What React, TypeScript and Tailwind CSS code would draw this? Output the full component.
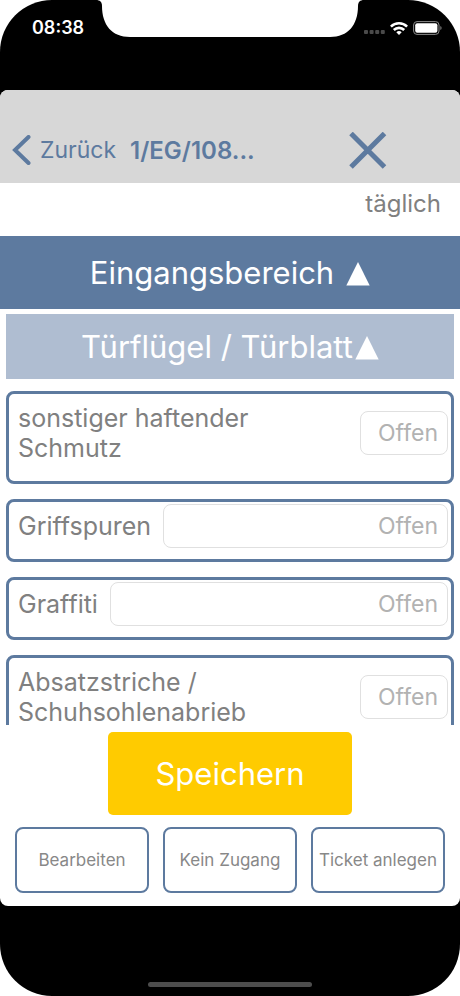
import { useState } from 'react';

type CheckItem = {
  id: string;
  label: string;
  compact?: boolean;
};

const items: CheckItem[] = [
  { id: 'schmutz', label: 'sonstiger haftender Schmutz', compact: true },
  { id: 'griffspuren', label: 'Griffspuren' },
  { id: 'graffiti', label: 'Graffiti' },
  { id: 'absatzstriche', label: 'Absatzstriche / Schuhsohlenabrieb', compact: true },
];

const actions = ['Bearbeiten', 'Kein Zugang', 'Ticket anlegen'];

function Triangle() {
  return (
    <svg viewBox="0 0 24 24" className="w-6 h-6 shrink-0" fill="currentColor" aria-hidden="true">
      <path d="M12 0 23.7 23.6H0.3Z" />
    </svg>
  );
}

function StatusBar() {
  return (
    <div className="relative h-[90px] shrink-0 flex items-start justify-between pl-8 pr-[18px] pt-4 text-white">
      {/* Notch */}
      <svg
        viewBox="0 0 268 37"
        className="absolute top-0 left-1/2 -translate-x-1/2 w-[268px] h-[37px]"
        fill="#fff"
        aria-hidden="true"
      >
        <path d="M0 0C4 0 6 2 6 6C6 25 16 37 34 37H234C252 37 262 25 262 6C262 2 264 0 268 0Z" />
      </svg>
      <span className="text-lg leading-6 font-semibold">08:38</span>
      <div className="flex items-center gap-[5px] h-6">
        <svg viewBox="0 0 21 4" className="w-[21px] h-1 mt-2" fill="#4a4a4a" aria-hidden="true">
          <rect x="0" y="0" width="4" height="4" rx="1" />
          <rect x="5.6" y="0" width="4" height="4" rx="1" />
          <rect x="11.2" y="0" width="4" height="4" rx="1" />
          <rect x="16.8" y="0" width="4" height="4" rx="1" />
        </svg>
        <svg viewBox="0 0 18 13" className="w-[18px] h-[13px]" fill="none" stroke="#fff" strokeWidth="2.6" aria-hidden="true">
          <path d="M0.9 4.6A11.6 11.6 0 0 1 17.1 4.6" />
          <path d="M3.8 8A7.4 7.4 0 0 1 14.2 8" />
          <path d="M9 13 6.3 10.3A3.9 3.9 0 0 1 11.7 10.3Z" fill="#fff" stroke="none" />
        </svg>
        <svg viewBox="0 0 29 14" className="w-[29px] h-[14px]" aria-hidden="true">
          <rect x="0.6" y="0.6" width="25.4" height="12.8" rx="3.4" fill="none" stroke="#8a8a8a" strokeWidth="1" />
          <rect x="2.2" y="2.2" width="22.2" height="9.6" rx="2" fill="#fff" />
          <path d="M27.4 5A2.3 2.3 0 0 1 27.4 9Z" fill="#8a8a8a" />
        </svg>
      </div>
    </div>
  );
}

function Header() {
  return (
    <header className="h-[93px] shrink-0 flex items-center bg-[#d7d7d7] pt-7 pl-3 pr-[73px] text-[#5d7a9f]">
      <button className="flex items-center gap-2 text-[23px]">
        <svg viewBox="0 0 20 32" className="w-5 h-8" fill="none" stroke="currentColor" strokeWidth="4" strokeLinecap="round" strokeLinejoin="miter" aria-hidden="true">
          <path d="M16.5 2 3 15 16.5 28" />
        </svg>
        Zurück
      </button>
      <h1 className="ml-[14px] text-2xl font-semibold">1/EG/108...</h1>
      <button aria-label="Schließen" className="ml-auto">
        <svg viewBox="0 0 38 38" className="w-[38px] h-[38px]" fill="none" stroke="currentColor" strokeWidth="5" aria-hidden="true">
          <path d="M2 1.5 35.5 35M35.5 1.5 2 35" />
        </svg>
      </button>
    </header>
  );
}

function CheckCard({ item, value, onChange }: {
  item: CheckItem;
  value: string;
  onChange: (value: string) => void;
}) {
  return (
    <div className="shrink-0 flex items-center gap-3 rounded-lg border-3 border-[#5d7a9f] pl-[9px] pr-[3px] pt-[2px] pb-[11px]">
      <label
        htmlFor={item.id}
        className={`py-[7px] text-[25px] leading-[30px] text-[#808080] ${item.compact ? 'flex-1' : ''}`}
      >
        {item.label}
      </label>
      <input
        id={item.id}
        value={value}
        onChange={(e) => onChange(e.target.value)}
        placeholder="Offen"
        className={`h-11 min-w-0 rounded-lg border border-[#e0e0e0] px-[9px] text-right text-[23px] text-[#808080] placeholder:text-[#b2b2b2] ${
          item.compact ? 'w-[88px]' : 'flex-1'
        }`}
      />
    </div>
  );
}

export default function App() {
  const [values, setValues] = useState<Record<string, string>>({});
  const [areaOpen, setAreaOpen] = useState(true);
  const [partOpen, setPartOpen] = useState(true);

  return (
    <div className="bg-white font-['Inter',sans-serif]">
      <div className="h-screen flex flex-col overflow-hidden rounded-[52px] bg-black">
        <StatusBar />

        <div className="flex-1 min-h-0 flex flex-col overflow-hidden rounded-lg bg-white">
          <Header />

          <main className="flex-1 min-h-0 overflow-y-auto [scrollbar-width:none]">
            <p className="h-[53px] pt-[6px] pr-[19px] text-right text-2xl leading-[30px] text-[#808080]">täglich</p>

            <button
              onClick={() => setAreaOpen(!areaOpen)}
              className="w-full h-[73px] pt-[2px] flex items-center justify-center gap-3 bg-[#5d7a9f] text-[31px] text-white"
            >
              Eingangsbereich
              <Triangle />
            </button>

            {areaOpen && (
              <div className="px-[6px] pt-[5px]">
                <button
                  onClick={() => setPartOpen(!partOpen)}
                  className="w-full h-[65px] pt-[2px] flex items-center justify-center gap-[2px] bg-[#afbdd1] text-[31px] text-white"
                >
                  Türflügel / Türblatt
                  <Triangle />
                </button>

                {partOpen && (
                  <div className="flex flex-col gap-[15px] pt-3">
                    {items.map((item) => (
                      <CheckCard
                        key={item.id}
                        item={item}
                        value={values[item.id] ?? ''}
                        onChange={(value) => setValues({ ...values, [item.id]: value })}
                      />
                    ))}
                  </div>
                )}
              </div>
            )}
          </main>

          {/* Actions */}
          <footer className="shrink-0 flex flex-col items-center gap-3 px-[15px] pt-[7px] pb-[13px]">
            <button className="h-[83px] pt-[2px] px-[47px] rounded-[5px] bg-[#ffcb00] text-[31px] text-white">Speichern</button>
            <div className="w-full grid grid-cols-3 gap-[14px]">
              {actions.map((action) => (
                <button
                  key={action}
                  className="h-[66px] pt-[2px] rounded-lg border-2 border-[#5d7a9f] text-[17px] text-[#888888] whitespace-nowrap"
                >
                  {action}
                </button>
              ))}
            </div>
          </footer>
        </div>

        {/* Home indicator */}
        <div className="h-[90px] shrink-0 flex items-end justify-center pb-[9px]">
          <div className="w-[164px] h-[5px] rounded-full bg-[#4d4d4d]" />
        </div>
      </div>
    </div>
  );
}
